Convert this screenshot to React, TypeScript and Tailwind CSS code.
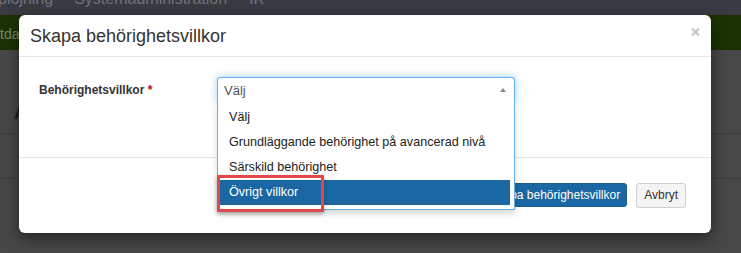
const options = ['Välj', 'Grundläggande behörighet på avancerad nivå', 'Särskild behörighet', 'Övrigt villkor']

function SelectOpen() {
  return (
    <div className="relative w-[298px]">
      <div className="h-[28px] border border-b-0 border-[#66afe9] rounded-t-[3px] bg-white pl-[6px] pr-[8px] pt-[5px] flex items-start justify-between shadow-[0_0_8px_rgba(102,175,233,0.6)]">
        <span className="text-[13px] leading-[15px] text-[#555]">Välj</span>
        <svg width="6" height="4" viewBox="0 0 6 4" className="mt-[5px]">
          <path d="M0 4 L3 0 L6 4 Z" fill="#888" />
        </svg>
      </div>
      <div className="absolute left-0 top-[28px] w-[298px] bg-white border border-t-0 border-[#66afe9] pr-[4px] pb-[4px] shadow-[0_4px_6px_rgba(0,0,0,0.15)] z-10">
        {options.map((o, i) => (
          <div
            key={o}
            className={
              i === 3
                ? 'h-[25px] leading-[25px] pl-[11px] text-[12.6px] bg-[#1a67a3] text-white'
                : 'h-[25px] leading-[25px] pl-[11px] text-[12.6px] text-[#222]'
            }
          >
            {o}
          </div>
        ))}
      </div>
    </div>
  )
}

export default function App() {
  return (
    <div className="relative w-[741px] h-[253px] overflow-hidden bg-[#474747] font-['Liberation_Sans',Arial,sans-serif]">
      {/* page behind the backdrop */}
      <div className="h-[15px] bg-[#383b42] overflow-hidden">
        <div className="flex text-[16px] leading-[16px] text-[#6f7278] mt-[-9px] ml-[-2px]">
          <span>plojning</span>
          <span className="ml-[21px]">Systemadministration</span>
          <span className="ml-[22px]">IK</span>
        </div>
      </div>
      <div className="h-[35px] bg-[#1b3304] text-[14px] leading-[16px] text-[#7d8a74] pt-[11px]">tda</div>
      <div className="h-[84px] border-b border-[#3b3b3b]">
        <div className="pt-[55px] pl-[14px] text-[16px] font-bold leading-[18px] text-[#1d1d1d]">A</div>
      </div>
      <div className="h-[45px] border-b border-[#3b3b3b]"></div>

      {/* modal */}
      <div className="absolute left-[19px] top-[15px] w-[692px] h-[218px] bg-white rounded-[6px] shadow-[0_5px_15px_rgba(0,0,0,0.5)] flex flex-col">
        <div className="h-[42px] border-b border-[#e5e5e5] flex items-start justify-between pl-[11px] pr-[11px]">
          <h4 className="pt-[8px] text-[18px] leading-[26px] text-[#333]">Skapa behörighetsvillkor</h4>
          <svg width="9" height="8" viewBox="0 0 9 8" className="mt-[13px]">
            <path d="M1 0.5 L8 7.5 M8 0.5 L1 7.5" stroke="#c4c4c4" strokeWidth="2.2" />
          </svg>
        </div>
        <div className="h-[100px] pt-[20px] px-[20px] flex items-start">
          <label className="w-[178px] pt-[6px] text-[12px] leading-[15px] font-bold text-[#333]">
            Behörighetsvillkor <span className="text-[#c00]">*</span>
          </label>
          <SelectOpen />
        </div>
        <div className="flex-1 border-t border-[#e5e5e5] flex justify-end items-start p-[25px]">
          <button className="h-[24px] px-[6px] text-[12px] leading-[22px] text-white bg-[#1a67a3] border border-[#175b90] rounded-[3px]">
            Skapa behörighetsvillkor
          </button>
          <button className="ml-[9px] h-[25px] px-[7px] text-[12px] leading-[23px] text-[#333] bg-[#f4f4f4] border border-[#cfcfcf] rounded-[3px]">
            Avbryt
          </button>
        </div>
      </div>

      {/* annotation */}
      <div className="absolute left-[217px] top-[175px] w-[107px] h-[37px] border-[3px] border-[#e2474b] shadow-[0_2px_4px_rgba(0,0,0,0.3)] z-20"></div>
    </div>
  )
}
